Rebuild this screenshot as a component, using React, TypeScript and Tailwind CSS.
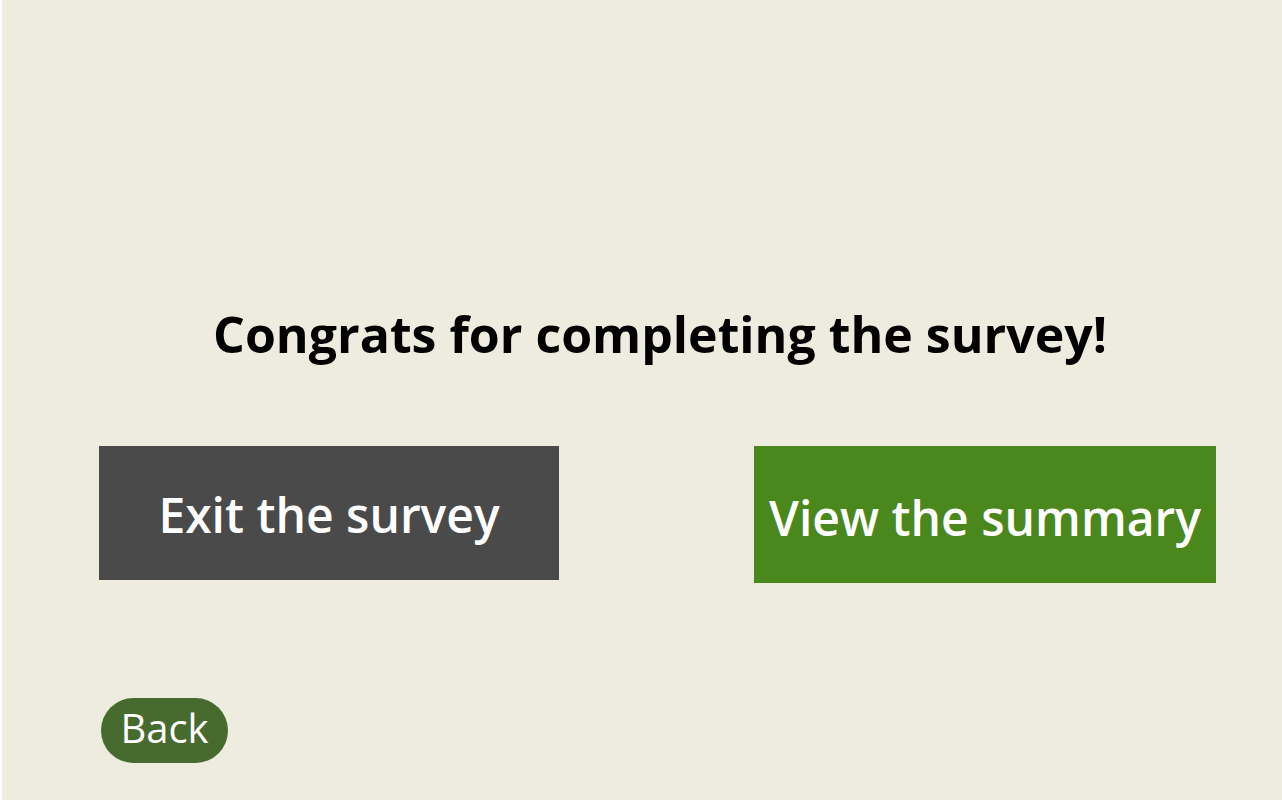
export default function App() {
  return (
    <div className="min-h-screen bg-white pl-[2px]" style={{ fontFamily: '"Open Sans", sans-serif' }}>
      <div className="flex h-[800px] w-[1280px] flex-col bg-[#eeebdf]">
        <h1 className="mt-[297px] pl-[36px] text-center text-[50px] font-bold leading-[74px] text-black">
          Congrats for completing the survey!
        </h1>

        <div className="mt-[75px] flex items-start">
          <button className="ml-[97px] flex h-[134px] w-[460px] items-center justify-center bg-[#4a4a4a] pt-[4px] text-[48px] font-semibold text-white">
            Exit the survey
          </button>
          <button className="ml-[195px] flex h-[137px] w-[462px] items-center justify-center bg-[#4a871d] pt-[6px] text-[48px] font-semibold text-white">
            View the summary
          </button>
        </div>

        <div className="mt-[115px] pl-[99px]">
          <button className="flex h-[65px] w-[127px] items-center justify-center rounded-full bg-[#476b2f] pb-[5px] text-[40px] text-white">
            Back
          </button>
        </div>
      </div>
    </div>
  )
}
